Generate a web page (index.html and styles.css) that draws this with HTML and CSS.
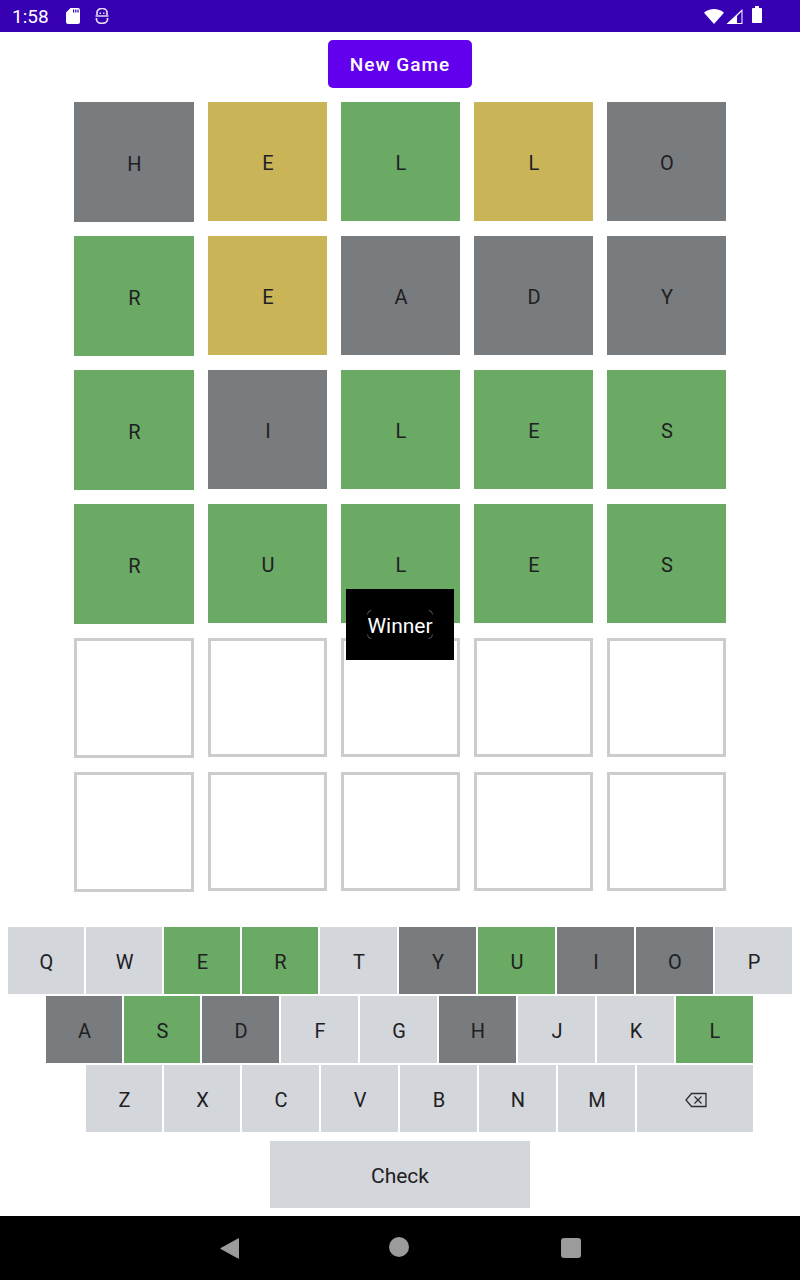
FILE: index.html
```html
<!DOCTYPE html>
<html>
  <head>
    <meta charset="UTF-8">
    <title>Wordle</title>
    <link rel="stylesheet" href="styles.css">
  </head>
  <body>
    <div class="status-bar">
      <span class="clock">1:58</span>
      <svg class="status-icon sd" viewBox="0 0 16 16"><path fill="#fff" fill-rule="evenodd" d="M5.500 0H13a2 2 0 0 1 2 2v12a2 2 0 0 1-2 2H3a2 2 0 0 1-2-2V4.500zM8 1.500v3h1.200v-3zM10.200 1.500v3h1.200v-3zM12.400 1.500v3h1.200v-3z"/></svg>
      <svg class="status-icon debug" viewBox="0 0 14 16"><path fill="none" stroke="#e6dcf5" stroke-width="1.700" d="M2 7V4.500a4.500 3.700 0 0 1 10 0V7M.500 8h13M1.500 10v1.500a5.500 3.800 0 0 0 11 0V10"/><path fill="#e6dcf5" d="M4.500 4.500h1.500v1.500H4.500zM8 4.500h1.500v1.500H8z"/></svg>
      <span class="status-right">
        <svg class="wifi" viewBox="0 0 20 15"><path fill="#fff" d="M0 3.800C5.500-1.200 14.500-1.200 20 3.800L10 15z"/></svg>
        <svg class="cell" viewBox="0 0 16 15"><path fill="#fff" d="M16 0v15H0zM15 2.500 10.500 7v7H15z" fill-rule="evenodd"/></svg>
        <svg class="battery" viewBox="0 0 10 17"><path fill="#fff" d="M3 0h4v2h2a1 1 0 0 1 1 1v13a1 1 0 0 1-1 1H1a1 1 0 0 1-1-1V3a1 1 0 0 1 1-1h2z"/></svg>
      </span>
    </div>

    <div class="content">
      <button class="new-game">New Game</button>

      <div class="board">
        <div class="tile gray">H</div>
        <div class="tile yellow">E</div>
        <div class="tile green">L</div>
        <div class="tile yellow">L</div>
        <div class="tile gray">O</div>

        <div class="tile green">R</div>
        <div class="tile yellow">E</div>
        <div class="tile gray">A</div>
        <div class="tile gray">D</div>
        <div class="tile gray">Y</div>

        <div class="tile green">R</div>
        <div class="tile gray">I</div>
        <div class="tile green">L</div>
        <div class="tile green">E</div>
        <div class="tile green">S</div>

        <div class="tile green">R</div>
        <div class="tile green">U</div>
        <div class="tile green">L</div>
        <div class="tile green">E</div>
        <div class="tile green">S</div>

        <div class="tile empty"></div>
        <div class="tile empty"></div>
        <div class="tile empty"></div>
        <div class="tile empty"></div>
        <div class="tile empty"></div>

        <div class="tile empty"></div>
        <div class="tile empty"></div>
        <div class="tile empty"></div>
        <div class="tile empty"></div>
        <div class="tile empty"></div>

        <div class="toast">
          <span class="toast-text">
            Winner
            <svg class="toast-corners" viewBox="0 0 66 29"><path fill="none" stroke="#555" d="M.500 4.500a4 4 0 0 1 4-4M61.500.500a4 4 0 0 1 4 4M65.500 24.500a4 4 0 0 1-4 4M4.500 28.500a4 4 0 0 1-4-4"/></svg>
          </span>
        </div>
      </div>

      <div class="keyboard">
        <div class="key-row row-top">
          <div class="key narrow">Q</div>
          <div class="key narrow">W</div>
          <div class="key narrow green">E</div>
          <div class="key narrow green">R</div>
          <div class="key">T</div>
          <div class="key gray">Y</div>
          <div class="key green">U</div>
          <div class="key gray">I</div>
          <div class="key gray">O</div>
          <div class="key">P</div>
        </div>
        <div class="key-row row-middle">
          <div class="key narrow gray">A</div>
          <div class="key narrow green">S</div>
          <div class="key gray">D</div>
          <div class="key">F</div>
          <div class="key">G</div>
          <div class="key gray">H</div>
          <div class="key">J</div>
          <div class="key">K</div>
          <div class="key green">L</div>
        </div>
        <div class="key-row row-bottom">
          <div class="key narrow">Z</div>
          <div class="key narrow">X</div>
          <div class="key">C</div>
          <div class="key">V</div>
          <div class="key">B</div>
          <div class="key">N</div>
          <div class="key">M</div>
          <div class="key key-wide">
            <svg class="backspace" viewBox="0 0 22 16"><path fill="none" stroke="#2b2d33" stroke-width="1.300" d="M6.500 1.500H21v13H6.500L1 8zM9.500 4.500l7 7M16.500 4.500l-7 7"/></svg>
          </div>
        </div>
        <div class="key-row row-check">
          <div class="key key-check">Check</div>
        </div>
      </div>
    </div>

    <div class="nav-bar">
      <svg class="nav-back" viewBox="0 0 19 21"><path fill="#9b9b9b" stroke="#9b9b9b" stroke-linejoin="round" d="M.700 10.500 18.500.700v19.600z"/></svg>
      <span class="nav-home"></span>
      <span class="nav-recent"></span>
    </div>
  </body>
</html>
```

FILE: styles.css
```css
* {
  box-sizing: border-box;
}

body {
  background-color: #fff;
  font-family: Roboto, "Liberation Sans", sans-serif;
  height: 1280px;
  margin: 0;
  overflow: hidden;
  padding: 0;
}

.status-bar {
  align-items: center;
  background-color: #3700b3;
  color: #fff;
  display: flex;
  height: 32px;
  padding: 0 38px 0 12px;
}

.clock {
  font-size: 19px;
  width: 53px;
}

.status-icon {
  display: block;
  height: 16px;
}

.sd {
  margin-right: 14px;
  width: 16px;
}

.debug {
  width: 14px;
}

.status-right {
  align-items: center;
  display: flex;
  margin-left: auto;
}

.wifi {
  height: 15px;
  margin-right: 2px;
  width: 20px;
}

.cell {
  height: 15px;
  margin-right: 9px;
  width: 17px;
}

.battery {
  height: 17px;
  margin-bottom: 3px;
  width: 10px;
}

.content {
  display: flex;
  flex-direction: column;
  height: 1184px;
  padding-top: 8px;
}

.new-game {
  align-self: center;
  background-color: #6200ee;
  border: none;
  border-radius: 5px;
  color: #fff;
  font-family: Roboto, sans-serif;
  font-size: 19px;
  font-weight: 500;
  height: 48px;
  letter-spacing: 1px;
  width: 144px;
}

.board {
  align-items: start;
  display: grid;
  gap: 14px;
  grid-template-columns: 120px repeat(4, 119px);
  grid-auto-rows: 120px;
  margin: 14px 0 0 74px;
  position: relative;
  width: 652px;
}

.tile {
  align-items: center;
  color: #1f2023;
  display: flex;
  font-size: 20px;
  height: 119px;
  justify-content: center;
  padding: 3px 0 0 1px;
}

.tile:nth-child(5n + 1) {
  height: 120px;
}

.tile.gray {
  background-color: #787c7e;
}

.tile.yellow {
  background-color: #c9b458;
}

.tile.green {
  background-color: #6aaa64;
}

.tile.empty {
  border: 3px solid #ccc;
}

.toast {
  align-items: center;
  background-color: #000;
  display: flex;
  height: 71px;
  justify-content: center;
  left: 272px;
  position: absolute;
  top: 487px;
  width: 108px;
}

.toast-text {
  color: #fff;
  font-size: 21px;
  height: 29px;
  line-height: 33px;
  position: relative;
  text-align: center;
  width: 66px;
}

.toast-corners {
  height: 29px;
  left: 0;
  position: absolute;
  top: 0;
  width: 66px;
}

.keyboard {
  display: flex;
  flex-direction: column;
  gap: 2px;
  margin-top: 35px;
}

.key-row {
  display: flex;
  gap: 2px;
}

.row-top {
  padding-left: 8px;
}

.row-middle {
  padding-left: 46px;
}

.row-bottom {
  padding-left: 86px;
}

.row-check {
  justify-content: center;
  margin-top: 7px;
}

.key {
  align-items: center;
  background-color: #d3d6da;
  color: #1f2023;
  display: flex;
  flex: none;
  font-size: 20px;
  height: 67px;
  justify-content: center;
  padding: 3px 0 0 1px;
  width: 77px;
}

.key.narrow {
  width: 76px;
}

.key.gray {
  background-color: #787c7e;
}

.key.green {
  background-color: #6aaa64;
}

.key-wide {
  width: 116px;
}

.key-check {
  font-size: 21px;
  padding-left: 0;
  width: 260px;
}

.backspace {
  height: 16px;
  width: 22px;
}

.nav-bar {
  align-items: center;
  background-color: #000;
  display: flex;
  height: 64px;
  padding: 0 0 2px 220px;
}

.nav-back {
  height: 21px;
  margin-top: 2px;
  width: 19px;
}

.nav-home {
  background-color: #9b9b9b;
  border-radius: 50%;
  height: 20px;
  margin-left: 150px;
  width: 20px;
}

.nav-recent {
  background-color: #9b9b9b;
  border-radius: 3px;
  height: 20px;
  margin-left: 152px;
  margin-top: 2px;
  width: 20px;
}
```
